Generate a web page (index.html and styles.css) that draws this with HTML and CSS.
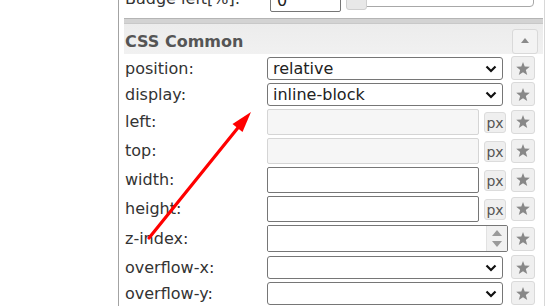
FILE: index.html
```html
<!DOCTYPE html>
<html lang="en">
<head>
    <meta charset="UTF-8">
    <title>CSS Common</title>
    <link rel="stylesheet" href="styles.css">
</head>
<body>
    <div class="panel">
        <div class="row row-badge">
            <label class="lbl">Badge left[%]:</label>
            <input class="badge-input" type="text" value="0">
            <div class="slider">
                <div class="track"></div>
                <span class="handle"></span>
            </div>
        </div>
        <div class="sep"></div>
        <div class="section-head">
            <span class="section-title">CSS Common</span>
            <button class="collapse">
                <svg width="8" height="5" viewBox="0 0 8 5"><path d="M0 5 L4 0 L8 5 Z" fill="#8a8a8a"/></svg>
            </button>
        </div>

        <div class="fields">
            <div class="row row-sel">
                <label class="lbl">position:</label>
                <div class="ctl">
                    <div class="select-wrap">
                        <select class="sel"><option>relative</option></select>
                        <svg class="chev" width="12" height="8" viewBox="0 0 12 8"><path d="M1.5 1.5 L6 6 L10.5 1.5" fill="none" stroke="#111" stroke-width="2.2"/></svg>
                    </div>
                </div>
                <button class="star"><svg width="14" height="13" viewBox="0 0 24 23"><path d="M12 0 L15 8 L24 8.5 L17 14 L19.5 23 L12 18 L4.5 23 L7 14 L0 8.5 L9 8 Z" fill="#888"/></svg></button>
            </div>
            <div class="row row-sel">
                <label class="lbl">display:</label>
                <div class="ctl">
                    <div class="select-wrap">
                        <select class="sel"><option>inline-block</option></select>
                        <svg class="chev" width="12" height="8" viewBox="0 0 12 8"><path d="M1.5 1.5 L6 6 L10.5 1.5" fill="none" stroke="#111" stroke-width="2.2"/></svg>
                    </div>
                </div>
                <button class="star"><svg width="14" height="13" viewBox="0 0 24 23"><path d="M12 0 L15 8 L24 8.5 L17 14 L19.5 23 L12 18 L4.5 23 L7 14 L0 8.5 L9 8 Z" fill="#888"/></svg></button>
            </div>
            <div class="row row-txt">
                <label class="lbl">left:</label>
                <div class="ctl">
                    <input class="txt" type="text" disabled>
                    <button class="unit">px</button>
                </div>
                <button class="star"><svg width="14" height="13" viewBox="0 0 24 23"><path d="M12 0 L15 8 L24 8.5 L17 14 L19.5 23 L12 18 L4.5 23 L7 14 L0 8.5 L9 8 Z" fill="#888"/></svg></button>
            </div>
            <div class="row row-txt">
                <label class="lbl">top:</label>
                <div class="ctl">
                    <input class="txt" type="text" disabled>
                    <button class="unit">px</button>
                </div>
                <button class="star"><svg width="14" height="13" viewBox="0 0 24 23"><path d="M12 0 L15 8 L24 8.5 L17 14 L19.5 23 L12 18 L4.5 23 L7 14 L0 8.5 L9 8 Z" fill="#888"/></svg></button>
            </div>
            <div class="row row-txt">
                <label class="lbl">width:</label>
                <div class="ctl">
                    <input class="txt" type="text">
                    <button class="unit">px</button>
                </div>
                <button class="star"><svg width="14" height="13" viewBox="0 0 24 23"><path d="M12 0 L15 8 L24 8.5 L17 14 L19.5 23 L12 18 L4.5 23 L7 14 L0 8.5 L9 8 Z" fill="#888"/></svg></button>
            </div>
            <div class="row row-txt">
                <label class="lbl">height:</label>
                <div class="ctl">
                    <input class="txt" type="text">
                    <button class="unit">px</button>
                </div>
                <button class="star"><svg width="14" height="13" viewBox="0 0 24 23"><path d="M12 0 L15 8 L24 8.5 L17 14 L19.5 23 L12 18 L4.5 23 L7 14 L0 8.5 L9 8 Z" fill="#888"/></svg></button>
            </div>
            <div class="row row-num">
                <label class="lbl">z-index:</label>
                <div class="ctl">
                    <div class="num-wrap">
                        <input class="num" type="text">
                        <div class="spin">
                            <svg width="10" height="6" viewBox="0 0 10 6"><path d="M0 6 L5 0 L10 6 Z" fill="#9a9a9a"/></svg>
                            <svg width="10" height="6" viewBox="0 0 10 6"><path d="M0 0 L5 6 L10 0 Z" fill="#9a9a9a"/></svg>
                        </div>
                    </div>
                </div>
                <button class="star"><svg width="14" height="13" viewBox="0 0 24 23"><path d="M12 0 L15 8 L24 8.5 L17 14 L19.5 23 L12 18 L4.5 23 L7 14 L0 8.5 L9 8 Z" fill="#888"/></svg></button>
            </div>
            <div class="row row-sel">
                <label class="lbl">overflow-x:</label>
                <div class="ctl">
                    <div class="select-wrap">
                        <select class="sel"><option></option></select>
                        <svg class="chev" width="12" height="8" viewBox="0 0 12 8"><path d="M1.5 1.5 L6 6 L10.5 1.5" fill="none" stroke="#111" stroke-width="2.2"/></svg>
                    </div>
                </div>
                <button class="star"><svg width="14" height="13" viewBox="0 0 24 23"><path d="M12 0 L15 8 L24 8.5 L17 14 L19.5 23 L12 18 L4.5 23 L7 14 L0 8.5 L9 8 Z" fill="#888"/></svg></button>
            </div>
            <div class="row row-sel">
                <label class="lbl">overflow-y:</label>
                <div class="ctl">
                    <div class="select-wrap">
                        <select class="sel"><option></option></select>
                        <svg class="chev" width="12" height="8" viewBox="0 0 12 8"><path d="M1.5 1.5 L6 6 L10.5 1.5" fill="none" stroke="#111" stroke-width="2.2"/></svg>
                    </div>
                </div>
                <button class="star"><svg width="14" height="13" viewBox="0 0 24 23"><path d="M12 0 L15 8 L24 8.5 L17 14 L19.5 23 L12 18 L4.5 23 L7 14 L0 8.5 L9 8 Z" fill="#888"/></svg></button>
            </div>
        </div>
    </div>

    <!-- annotation arrow -->
    <svg class="arrow" width="547" height="308" viewBox="0 0 547 308">
        <line x1="149" y1="238" x2="241" y2="124" stroke="#ff0000" stroke-width="3.2" stroke-linecap="round"/>
        <path d="M251 112 L242.5 132 L232.5 124 Z" fill="#ff0000"/>
    </svg>
</body>
</html>
```

FILE: styles.css
```css
body {
    margin: 0;
    font-family: "DejaVu Sans", Verdana, sans-serif;
    font-size: 16px;
    color: #333;
    background: #fff;
    overflow: hidden;
}
.panel {
    box-sizing: border-box;
    width: 427px;
    height: 320px;
    margin-left: 118px;
    margin-top: -14px;
    padding: 0 1px 0 5px;
    border-left: 1px solid #a3a3a3;
    border-right: 1px solid #d8d8d8;
}
.row {
    display: flex;
    align-items: center;
}
.row-sel {
    height: 26px;
}
.row-txt {
    height: 29px;
}
.row-num {
    height: 31px;
}
.lbl {
    width: 142px;
    padding-left: 1px;
    flex-shrink: 0;
    line-height: 19px;
}

/* badge row, cut off at the top */
.row-badge {
    height: 28px;
}
.row-badge .lbl {
    width: 145px;
    margin-top: -4px;
}
.badge-input {
    box-sizing: border-box;
    width: 71px;
    height: 24px;
    padding: 0 6px;
    border: 1px solid #767676;
    border-radius: 2px;
    font: inherit;
    color: #222;
}
.slider {
    position: relative;
    margin-left: 5px;
    width: 188px;
    height: 24px;
    align-self: flex-start;
}
.track {
    box-sizing: border-box;
    height: 21px;
    border: 1px solid #a8a8a8;
    border-radius: 4px;
}
.handle {
    position: absolute;
    left: 0;
    top: 0;
    box-sizing: border-box;
    width: 21px;
    height: 24px;
    background: #e8e8e8;
    border: 1px solid #cfcfcf;
    border-radius: 3px;
}

.sep {
    box-sizing: border-box;
    height: 6px;
    margin-top: 4px;
    background: #d3d3d3;
    border-top: 1px solid #b4b4b4;
    border-bottom: 1px solid #c8c8c8;
}
.section-head {
    display: flex;
    align-items: center;
    justify-content: space-between;
    height: 30px;
    background: linear-gradient(#ececec, #f1f1f1);
}
.section-title {
    padding-left: 1px;
    padding-top: 4px;
    font-weight: bold;
    color: #555;
}
.collapse {
    display: flex;
    align-items: center;
    justify-content: center;
    box-sizing: border-box;
    width: 26px;
    height: 25px;
    margin: 4px 5px 0 0;
    padding: 0 0 2px 0;
    background: #f3f3f3;
    border: 1px solid #d9d9d9;
    border-radius: 3px;
}

.fields {
    display: flex;
    flex-direction: column;
    padding-top: 1px;
}
.ctl {
    display: flex;
    align-items: center;
    width: 244px;
    flex-shrink: 0;
}
.select-wrap {
    position: relative;
    width: 236px;
    height: 23px;
}
.sel {
    appearance: none;
    box-sizing: border-box;
    width: 100%;
    height: 100%;
    margin: 0;
    padding: 0 0 0 5px;
    border: 1px solid #767676;
    border-radius: 3px;
    background: #fff;
    font: inherit;
    color: #222;
}
.chev {
    position: absolute;
    right: 6px;
    top: 8px;
}
.txt {
    box-sizing: border-box;
    width: 212px;
    height: 26px;
    margin: 0;
    border: 1px solid #767676;
    border-radius: 2px;
    background: #fff;
    font: inherit;
}
.txt:disabled {
    background: #f6f6f6;
    border-color: #d5d5d5;
}
.unit {
    box-sizing: border-box;
    width: 22px;
    height: 21px;
    margin: 2px 0 0 5px;
    padding: 0;
    background: #efefef;
    border: 1px solid #dcdcdc;
    border-radius: 3px;
    font-family: "DejaVu Sans", Verdana, sans-serif;
    font-size: 14px;
    color: #555;
    line-height: 18px;
}
.num-wrap {
    box-sizing: border-box;
    display: flex;
    width: 241px;
    height: 27px;
    border: 1px solid #767676;
    border-radius: 2px;
    overflow: hidden;
}
.num {
    flex: 1;
    min-width: 0;
    border: none;
    font: inherit;
}
.spin {
    display: flex;
    flex-direction: column;
    align-items: center;
    justify-content: center;
    gap: 5px;
    width: 20px;
    background: #f1f1f1;
    border-left: 1px solid #e2e2e2;
}
.star {
    display: flex;
    align-items: center;
    justify-content: center;
    box-sizing: border-box;
    width: 24px;
    height: 24px;
    padding: 0;
    background: #f0f0f0;
    border: 1px solid #dadada;
    border-radius: 3px;
    flex-shrink: 0;
}
.arrow {
    position: absolute;
    left: 0;
    top: 0;
    pointer-events: none;
}
```
